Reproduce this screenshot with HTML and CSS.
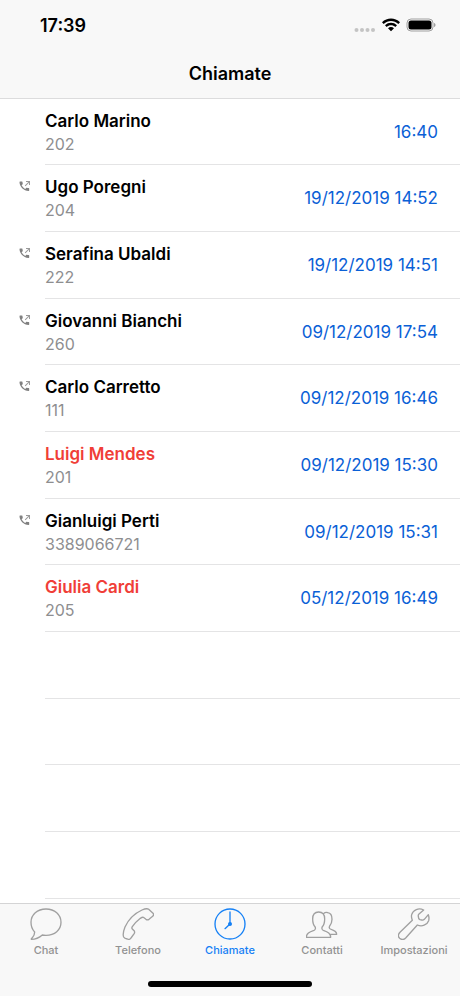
FILE: index.html
```html
<!DOCTYPE html>
<html lang="it">
<head>
<meta charset="utf-8">
<meta name="viewport" content="width=device-width, initial-scale=1">
<title>Chiamate</title>
<link rel="stylesheet" href="styles.css">
</head>
<body>
<svg class="defs" aria-hidden="true">
  <symbol id="outgoing" viewBox="0 0 24 24">
    <path d="M2 3h4c.6 0 1 .5 1 1 0 1.300.2 2.500.6 3.600.1.400 0 .8-.3 1.100L5.200 10.500c1.500 3 4 5.400 7.300 7.300l2.200-2.200c.3-.3.700-.4 1.100-.3 1.200.4 2.400.6 3.600.6.600 0 1 .5 1 1V21c0 .6-.4 1-1 1C9.200 22 1 13 1 4c0-.6.400-1 1-1z"/>
    <path class="arrow" d="M14 2h8v8h-2V5.400l-7 7-1.400-1.400 7-7H14z"/>
  </symbol>
</svg>
<header class="top">
  <div class="status">
    <span class="clock">17:39</span>
    <span class="indicators">
      <svg class="dots" viewBox="0 0 22 4" aria-hidden="true"><circle cx="2.500" cy="2" r="2"/><circle cx="8" cy="2" r="2"/><circle cx="13.500" cy="2" r="2"/><circle cx="19" cy="2" r="2"/></svg>
      <svg class="wifi" viewBox="0 0 54 42" aria-hidden="true"><path d="M0 13C15-2 39-2 54 13L49 18C36 6 18 6 5 18zM9 22C19 12 35 12 45 22L40 27C33 20 21 20 14 27zM18 31C23 26 31 26 36 31L27 40z"/></svg>
      <svg class="battery" viewBox="0 0 30 14" aria-hidden="true"><rect class="case" x="1" y="1" width="26" height="12" rx="4"/><rect x="2.500" y="2.500" width="23" height="9" rx="2.500"/><path class="cap" d="M28 5c2 .6 2 3.400 0 4z"/></svg>
    </span>
  </div>
  <h1>Chiamate</h1>
</header>
<main>
  <ul class="calls">
    <li><span class="kind"></span><div class="entry"><div class="who"><span class="name">Carlo Marino</span><span class="number">202</span></div><time>16:40</time></div></li>
    <li><span class="kind"><svg aria-hidden="true"><use href="#outgoing"/></svg></span><div class="entry"><div class="who"><span class="name">Ugo Poregni</span><span class="number">204</span></div><time>19/12/2019 14:52</time></div></li>
    <li><span class="kind"><svg aria-hidden="true"><use href="#outgoing"/></svg></span><div class="entry"><div class="who"><span class="name">Serafina Ubaldi</span><span class="number">222</span></div><time>19/12/2019 14:51</time></div></li>
    <li><span class="kind"><svg aria-hidden="true"><use href="#outgoing"/></svg></span><div class="entry"><div class="who"><span class="name">Giovanni Bianchi</span><span class="number">260</span></div><time>09/12/2019 17:54</time></div></li>
    <li><span class="kind"><svg aria-hidden="true"><use href="#outgoing"/></svg></span><div class="entry"><div class="who"><span class="name">Carlo Carretto</span><span class="number">111</span></div><time>09/12/2019 16:46</time></div></li>
    <li class="missed"><span class="kind"></span><div class="entry"><div class="who"><span class="name">Luigi Mendes</span><span class="number">201</span></div><time>09/12/2019 15:30</time></div></li>
    <li><span class="kind"><svg aria-hidden="true"><use href="#outgoing"/></svg></span><div class="entry"><div class="who"><span class="name">Gianluigi Perti</span><span class="number">3389066721</span></div><time>09/12/2019 15:31</time></div></li>
    <li class="missed"><span class="kind"></span><div class="entry"><div class="who"><span class="name">Giulia Cardi</span><span class="number">205</span></div><time>05/12/2019 16:49</time></div></li>
    <li aria-hidden="true"><span class="kind"></span><div class="entry"></div></li>
    <li aria-hidden="true"><span class="kind"></span><div class="entry"></div></li>
    <li aria-hidden="true"><span class="kind"></span><div class="entry"></div></li>
    <li aria-hidden="true"><span class="kind"></span><div class="entry"></div></li>
  </ul>
</main>
<footer class="bottom">
  <nav class="tabs">
    <a href="#chat"><svg viewBox="0 0 96 96" aria-hidden="true"><path d="M48 3C74 3 93 20 93 43S74 82 48 82C44 82 40 82 37 81C28 89 17 94 4 94C3 92 5 91 7 89C12 84 14 79 14 72C6 64 3 55 3 43C3 20 22 3 48 3Z"/></svg>Chat</a>
    <a href="#telefono"><svg viewBox="0 0 96 96" aria-hidden="true"><path d="M60 6C67 3 76 1 80 4L93 16C96 19 95 22 92 25L81 34C78 36 75 36 72 34L64 28C61 27 58 29 55 31C46 38 38 46 31 56C29 59 29 61 31 63L37 69C38 71 38 74 37 76L27 90C25 94 20 95 16 93C11 92 7 91 5 87C1 78 5 67 9 57C19 35 38 16 60 6Z"/></svg>Telefono</a>
    <a class="active" href="#chiamate" aria-current="page"><svg viewBox="0 0 96 96" aria-hidden="true"><circle cx="48" cy="48" r="45"/><path d="M48 12V48L33 62"/><circle class="pivot" cx="48" cy="48" r="4"/></svg>Chiamate</a>
    <a href="#contatti"><svg viewBox="0 0 96 96" aria-hidden="true"><path d="M1 88H74C74 76 66 72 52 67C47 65 47 60 49 56C55 50 56 43 56 33C56 18 49 12 38 12S20 18 20 33C20 43 21 50 27 56C29 60 29 65 24 67C10 72 1 76 1 88ZM52 17C57 13 61 12 65 14C75 15 78 21 78 34C78 43 75 49 71 54C69 58 69 61 73 63C86 68 92 71 92 79H71"/></svg>Contatti</a>
    <a href="#impostazioni"><svg viewBox="0 0 96 96" aria-hidden="true"><path d="M77 6C62-2 45 6 41 20C39 27 41 32 43 37L6 73C0 79 0 86 5 91C11 96 18 95 23 90L58 51C72 57 87 51 92 38C94 31 93 26 91 20L79 34C77 36 74 37 71 36L66 35C64 34 63 33 62 31L61 25C60 22 61 20 63 18Z"/></svg>Impostazioni</a>
  </nav>
  <div class="home"></div>
</footer>
</body>
</html>
```
FILE: styles.css
```css
* {
  box-sizing: border-box;
}

body {
  margin: 0;
  min-height: 100vh;
  display: flex;
  flex-direction: column;
  background: #fff;
  color: #000;
  font-family: Inter, "Liberation Sans", sans-serif;
}

.defs {
  position: absolute;
  width: 0;
  height: 0;
}

.top {
  background: #f8f8f8;
  border-bottom: 1px solid #dcdcdd;
}

.status {
  display: flex;
  justify-content: space-between;
  align-items: center;
  height: 50px;
  padding: 0 24px 0 40px;
}

.clock {
  font-size: 18px;
  font-weight: 600;
}

.indicators {
  display: flex;
  align-items: center;
  gap: 6px;
}

.dots {
  width: 22px;
  height: 4px;
  margin-top: 10px;
  fill: #c4c4c4;
}

.wifi {
  width: 18px;
  height: 14px;
}

.battery {
  width: 30px;
  height: 14px;
}

.case {
  fill: none;
  stroke: #a0a0a0;
}

.cap {
  fill: #a0a0a0;
}

h1 {
  margin: 0;
  height: 48px;
  font-size: 18px;
  font-weight: 600;
  line-height: 48px;
  text-align: center;
}

main {
  flex: 1;
}

.calls {
  margin: 0;
  padding: 0;
  list-style: none;
}

.calls li {
  display: flex;
  min-height: 67px;
}

.calls li:nth-child(3n + 1) {
  min-height: 66px;
}

.kind {
  width: 45px;
  padding: 15px 0 0 19px;
}

.kind svg {
  display: block;
  width: 12px;
  height: 12px;
  fill: #808080;
}

.arrow {
  fill: #9a9a9a;
}

.entry {
  flex: 1;
  display: flex;
  justify-content: space-between;
  align-items: center;
  padding-right: 22px;
  border-bottom: 1px solid #e4e4e5;
}

.who {
  display: flex;
  flex-direction: column;
}

.name {
  font-size: 17px;
  font-weight: 600;
  line-height: 24px;
}

.number {
  color: #8e8e90;
  font-size: 16px;
  line-height: 22px;
}

.missed .name {
  color: #f03e37;
}

time {
  color: #0a60d6;
  font-size: 17px;
}

.bottom {
  position: sticky;
  bottom: 0;
  padding-bottom: 9px;
  background: #f8f8f8;
  border-top: 1px solid #d4d4d5;
}

.tabs {
  display: flex;
  height: 74px;
}

.tabs a {
  flex: 1;
  display: flex;
  flex-direction: column;
  align-items: center;
  padding-top: 4px;
  color: #929292;
  font-size: 11px;
  font-weight: 500;
  line-height: 20px;
  text-decoration: none;
}

.tabs svg {
  width: 32px;
  height: 32px;
  fill: none;
  stroke: #a0a0a0;
  stroke-width: 4;
  stroke-linejoin: round;
  stroke-linecap: round;
}

.tabs .active {
  color: #1580f5;
}

.tabs .active svg {
  stroke: #1580f5;
}

.active .pivot {
  fill: #1580f5;
}

.home {
  width: 164px;
  height: 6px;
  margin: 3px auto 0;
  border-radius: 3px;
  background: #000;
}
```
